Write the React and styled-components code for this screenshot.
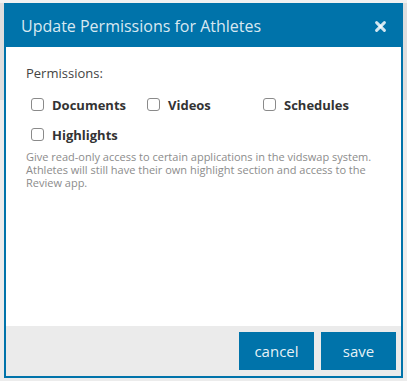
import React from 'react';
import styled, { createGlobalStyle } from 'styled-components';

const blue = '#0073aa';

const GlobalStyle = createGlobalStyle`
  html, body {
    margin: 0;
    padding: 0;
    background: #e6e6e6;
  }
  body {
    font-family: "Open Sans", "Liberation Sans", sans-serif;
  }
`;

const Backdrop = styled.div`
  width: 407px;
  height: 381px;
  box-sizing: border-box;
  padding: 3px 4px 3px 4px;
  background: linear-gradient(to bottom, #f1f1f1 0, #f1f1f1 3px, #dedede 3px, #dedede 100px, #ececec 100px);
`;

const Modal = styled.div`
  width: 399px;
  height: 375px;
  box-sizing: border-box;
  border: 2px solid ${blue};
  background: white;
  display: flex;
  flex-direction: column;
`;

const Header = styled.div`
  height: 42px;
  background: ${blue};
  display: flex;
  align-items: center;
  justify-content: space-between;
  padding: 2px 15px 0 15px;
  margin-top: -2px;
`;

const Title = styled.h2`
  margin: 0;
  font-size: 16px;
  font-weight: 400;
  color: rgba(255, 255, 255, 0.86);
  line-height: 24px;
`;

const CloseButton = styled.button`
  border: none;
  background: none;
  padding: 0;
  display: flex;
  cursor: pointer;
`;

const Body = styled.div`
  flex: 1;
  padding: 17px 20px 0 20px;
`;

const SectionLabel = styled.div`
  font-size: 13px;
  line-height: 18px;
  color: #444;
`;

const OptionGrid = styled.div`
  display: grid;
  grid-template-columns: repeat(3, 116px);
  row-gap: 12px;
  margin-top: 13.5px;
`;

const Option = styled.label`
  display: flex;
  align-items: center;
  gap: 8px;
  padding-left: 5px;
  font-size: 13px;
  line-height: 18px;
  font-weight: 700;
  color: #333;
`;

const Box = styled.span`
  width: 11px;
  height: 11px;
  border: 1px solid #8a8a8a;
  border-radius: 3px;
  background: white;
  flex-shrink: 0;
`;

const Help = styled.p`
  margin: 6px 0 0 0;
  font-size: 11px;
  line-height: 13px;
  color: #8c8c8c;
`;

const Footer = styled.div`
  height: 50px;
  background: #ebebeb;
  display: flex;
  align-items: center;
  justify-content: flex-end;
  gap: 7px;
  padding-right: 5px;
`;

const Button = styled.button`
  width: 75px;
  height: 38px;
  border: none;
  background: ${blue};
  color: rgba(255, 255, 255, 0.92);
  font-family: "Open Sans", "Liberation Sans", sans-serif;
  font-size: 15px;
  padding: 0;
  cursor: pointer;
`;

const CloseIcon = () => (
  <svg width="11" height="11" viewBox="0 0 11 11">
    <g stroke="rgba(255,255,255,0.82)" strokeWidth="2.9" strokeLinecap="round">
      <line x1="1.6" y1="1.6" x2="9.4" y2="9.4" />
      <line x1="9.4" y1="1.6" x2="1.6" y2="9.4" />
    </g>
  </svg>
);

const permissions = ['Documents', 'Videos', 'Schedules', 'Highlights'];

const App = () => (
  <>
    <GlobalStyle />
    <Backdrop>
      <Modal>
        <Header>
          <Title>Update Permissions for Athletes</Title>
          <CloseButton aria-label="close">
            <CloseIcon />
          </CloseButton>
        </Header>
        <Body>
          <SectionLabel>Permissions:</SectionLabel>
          <OptionGrid>
            {permissions.map((name) => (
              <Option key={name}>
                <Box />
                {name}
              </Option>
            ))}
          </OptionGrid>
          <Help>
            Give read-only access to certain applications in the vidswap system. Athletes will
            still have their own highlight section and access to the Review app.
          </Help>
        </Body>
        <Footer>
          <Button>cancel</Button>
          <Button>save</Button>
        </Footer>
      </Modal>
    </Backdrop>
  </>
);

export default App;
